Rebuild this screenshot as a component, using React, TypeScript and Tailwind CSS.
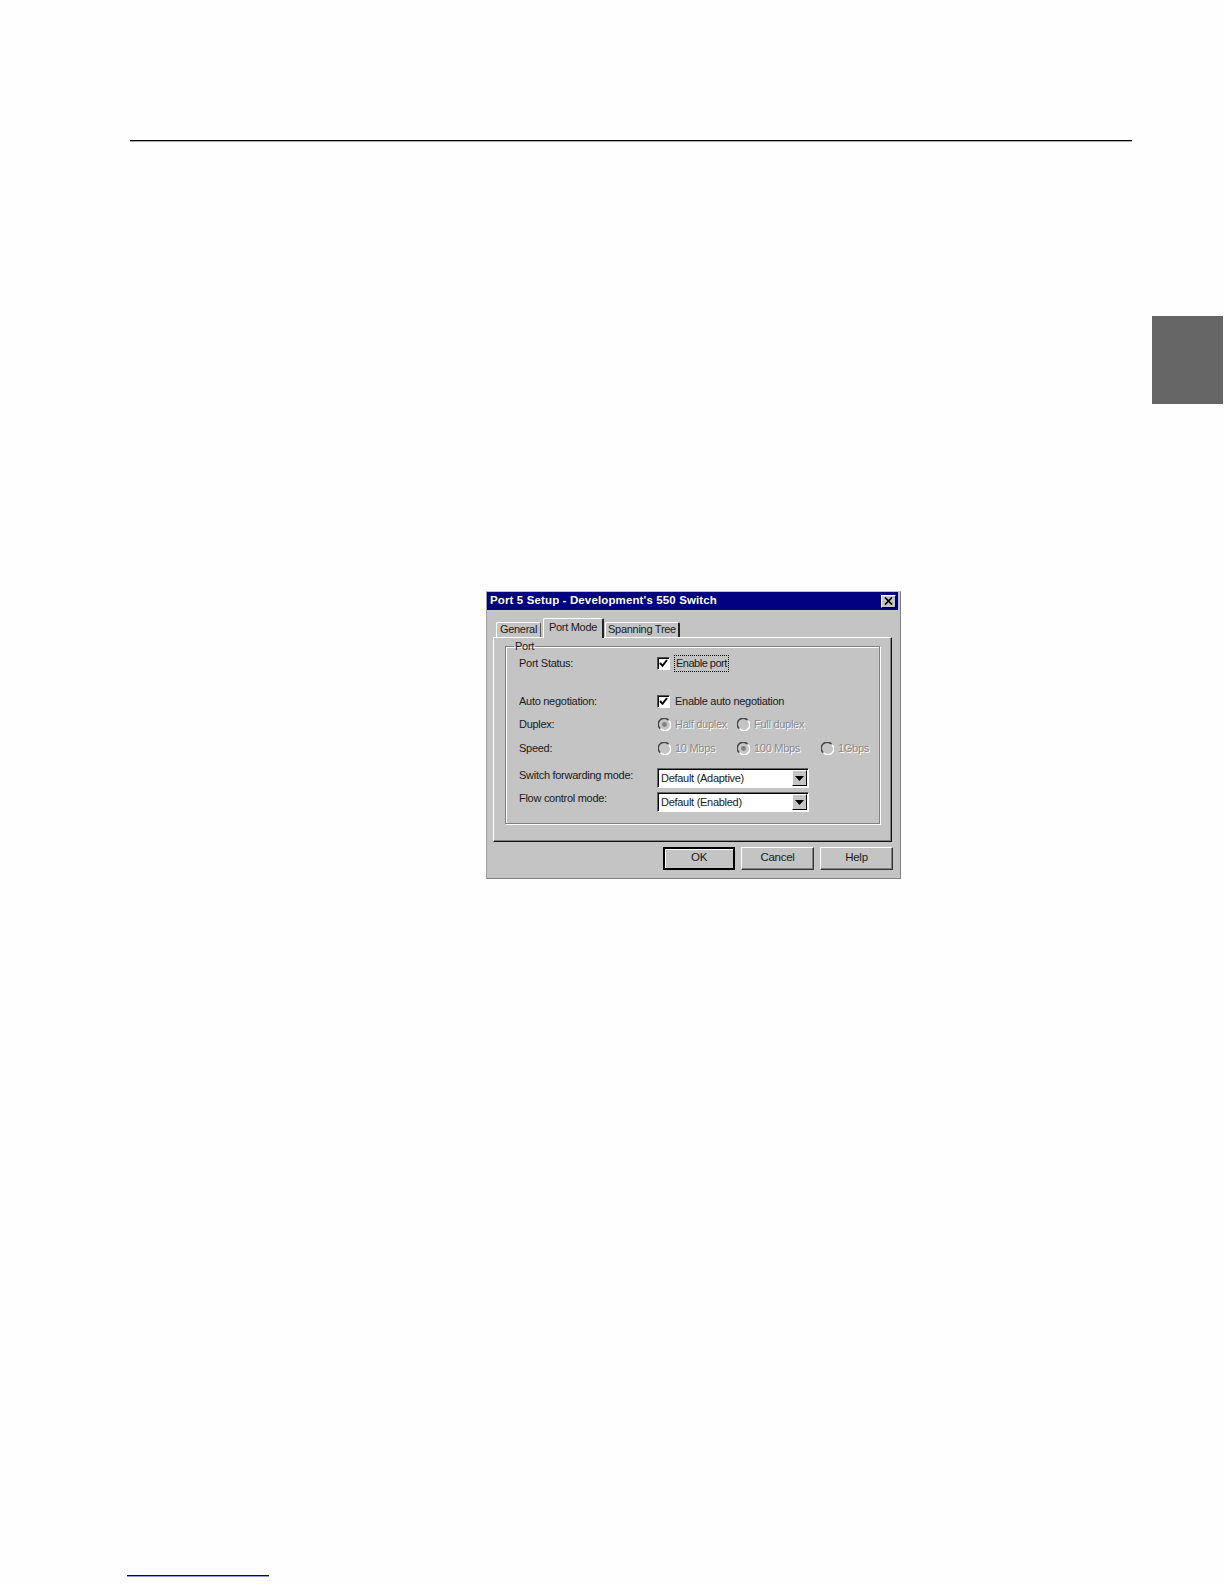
const disabledText = 'whitespace-nowrap text-[#8a8a8a] [text-shadow:1px_1px_0_#ffffff]';

function CheckBox() {
  return (
    <span className="flex h-[13px] w-[13px] shrink-0 items-center justify-center border-t border-l border-t-[#555555] border-l-[#555555] border-r border-b border-r-white border-b-white bg-white shadow-[inset_1px_1px_0_#000000]">
      <svg width="9" height="9" viewBox="0 0 9 9">
        <path d="M1 4 L3.5 6.8 L8 1" fill="none" stroke="#000000" strokeWidth="2" />
      </svg>
    </span>
  );
}

function Radio({ checked }: { checked?: boolean }) {
  return (
    <svg width="13" height="13" viewBox="0 0 13 13" className="shrink-0">
      <circle cx="6.5" cy="6.5" r="5" fill="#c4c4c4" />
      <path d="M2 10.5 A5.6 5.6 0 0 1 10.5 2" fill="none" stroke="#444444" strokeWidth="1.4" />
      <path d="M11 3 A5.6 5.6 0 0 1 3 11" fill="none" stroke="#ffffff" strokeWidth="1.4" />
      {checked && <circle cx="6.5" cy="6.5" r="2.4" fill="#808080" />}
    </svg>
  );
}

function RadioOption({ label, checked, width }: { label: string; checked?: boolean; width: string }) {
  return (
    <div className={`flex items-center gap-[4px] ${width}`}>
      <Radio checked={checked} />
      <span className={disabledText}>{label}</span>
    </div>
  );
}

function Select({ value }: { value: string }) {
  return (
    <div className="flex h-[20px] w-[152px] items-center border-t border-l border-t-[#666666] border-l-[#666666] border-r border-b border-r-white border-b-white bg-white pr-[1px] shadow-[inset_1px_1px_0_#000000]">
      <span className="flex-1 pl-[3px] pt-[1px]">{value}</span>
      <span className="flex h-[16px] w-[15px] items-center justify-center border border-t-white border-l-white border-r-black border-b-black bg-[#c4c4c4]">
        <svg width="9" height="5" viewBox="0 0 9 5">
          <path d="M0 0 H9 L4.5 5 Z" fill="#000000" />
        </svg>
      </span>
    </div>
  );
}

function Button({ label, isDefault }: { label: string; isDefault?: boolean }) {
  return (
    <button
      className={`flex h-[23px] items-center justify-center border bg-[#c4c4c4] pb-[1px] text-[11.5px] ${
        isDefault
          ? 'w-[72px] border-2 border-black shadow-[inset_1px_1px_0_#ffffff]'
          : 'w-[73px] border-t-white border-l-white border-r-[#333333] border-b-[#333333] shadow-[inset_-1px_-1px_0_#808080]'
      }`}
    >
      {label}
    </button>
  );
}

export default function App() {
  return (
    <div className="flex h-[1584px] w-[1224px] flex-col bg-[#fefefe] font-['Liberation_Sans',Arial,sans-serif] text-[11px] tracking-[-0.28px] text-[#1a1a1a]">
      <div className="ml-[130px] mt-[140px] h-[1px] w-[1002px] bg-black shadow-[0_1px_0_#aaaaaa]" />
      <div className="ml-[1152px] mt-[175px] h-[88px] w-[71px] bg-[#666666]" />

      {/* dialog */}
      <div className="ml-[486px] mt-[187px] flex h-[288px] w-[415px] flex-col border border-t-[#c4c4c4] border-l-[#a0a0a0] border-r-[#808080] border-b-[#808080] bg-[#c4c4c4] pr-[2px]">
        <div className="flex h-[18px] items-center justify-between bg-[#000080] pl-[3px] pr-[2px] text-[11.5px] font-bold tracking-[0.13px] text-white">
          <span>Port 5 Setup - Development's 550 Switch</span>
          <span className="flex h-[13px] w-[15px] items-center justify-center border border-t-white border-l-white border-r-black border-b-black bg-[#c4c4c4]">
            <svg width="9" height="8" viewBox="0 0 9 8">
              <path d="M1 0.5 L8 7.5 M8 0.5 L1 7.5" stroke="#000000" strokeWidth="1.7" fill="none" />
            </svg>
          </span>
        </div>

        <div className="flex flex-1 flex-col px-[6px] pt-[8px]">
          <div className="relative z-10 flex h-[19px] items-end whitespace-nowrap pl-[3px]">
            <div className="flex h-[15px] w-[45px] items-center justify-center rounded-t-[2px] border-t border-l border-t-white border-l-white border-r border-r-[#555555] pb-[1px]">
              General
            </div>
            <div className="ml-[2px] -mb-px flex h-[20px] w-[61px] items-start justify-center rounded-t-[2px] border-t border-l border-t-white border-l-white border-r-2 border-r-[#222222] bg-[#c4c4c4]">
              Port Mode
            </div>
            <div className="ml-px flex h-[15px] w-[75px] items-center justify-center rounded-t-[2px] border-t border-l border-t-white border-l-white border-r-2 border-r-[#222222] pb-[1px]">
              Spanning Tree
            </div>
          </div>

          <div className="h-[205px] border border-t-white border-l-white border-r-[#111111] border-b-[#111111] px-[11px] pt-[3px] shadow-[inset_-1px_-1px_0_#808080]">
            <fieldset className="h-[183px] border border-[#808080] pl-[13px] shadow-[1px_1px_0_#ffffff,inset_1px_1px_0_#ffffff]">
              <legend className="ml-[-5px] px-[1px] leading-[10px]">Port</legend>

              <div className="mt-[2px] flex h-[20px] items-center">
                <span className="w-[138px]">Port Status:</span>
                <CheckBox />
                <span className="ml-[4px] border border-dotted border-black px-[1px] py-[1px] leading-[13px] tracking-[-0.5px]">Enable port</span>
              </div>
              <div className="mt-[18px] flex h-[20px] items-center">
                <span className="w-[138px]">Auto negotiation:</span>
                <CheckBox />
                <span className="ml-[5px]">Enable auto negotiation</span>
              </div>
              <div className="mt-[3px] flex h-[20px] items-center">
                <span className="w-[139px]">Duplex:</span>
                <RadioOption label="Half duplex" checked width="w-[79px]" />
                <RadioOption label="Full duplex" width="w-[84px]" />
              </div>
              <div className="mt-[4px] flex h-[20px] items-center">
                <span className="w-[139px]">Speed:</span>
                <RadioOption label="10 Mbps" width="w-[79px]" />
                <RadioOption label="100 Mbps" checked width="w-[84px]" />
                <RadioOption label="1Gbps" width="w-[50px]" />
              </div>
              <div className="mt-[10px] flex h-[20px] items-center">
                <span className="mb-[6px] w-[138px]">Switch forwarding mode:</span>
                <Select value="Default (Adaptive)" />
              </div>
              <div className="mt-[4px] flex h-[20px] items-center">
                <span className="mb-[8px] w-[138px]">Flow control mode:</span>
                <Select value="Default (Enabled)" />
              </div>
            </fieldset>
          </div>

          <div className="mr-[-1px] mt-[5px] flex justify-end gap-[6px]">
            <Button label="OK" isDefault />
            <Button label="Cancel" />
            <Button label="Help" />
          </div>
        </div>
      </div>

      <div className="mb-[8px] ml-[127px] mt-auto h-[1px] w-[142px] bg-[#000080] shadow-[0_1px_0_#9999cc]" />
    </div>
  );
}
